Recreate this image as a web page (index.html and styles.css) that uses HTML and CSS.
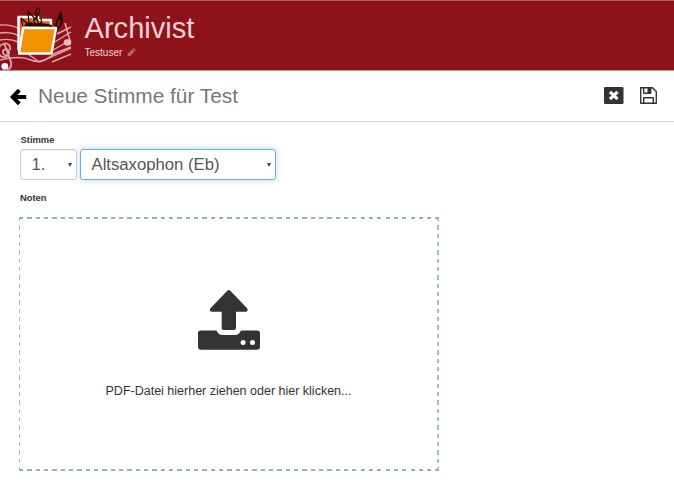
FILE: index.html
```
<!DOCTYPE html>
<html lang="de">
<head>
<meta charset="utf-8">
<title>Archivist</title>
<link rel="stylesheet" href="styles.css">
</head>
<body>
<header class="banner">
  <svg class="logo" viewBox="0 0 72 70" aria-hidden="true">
    <g fill="none" stroke="#dda5ac" stroke-width="1.4">
      <path d="M0 25Q10 24 20 29M0 33Q10 31 20 36M0 40Q10 38 18 42M0 60Q20 55 31 60T55 53L71 47"/>
      <path d="M28 54Q34 58 39 62Q43 61 53 56L71 48M52 62L71 54M53 43L71 32M57 34L71 27M53 50L71 40"/>
      <path d="M65 23L70 41" stroke-width="1.6"/>
      <path d="M7 55a3 3 0 1 1 1-5c3 3-1 8-5 7c-6-1-6-11 0-13c5-2 8 2 7 6M4 43L11 62Q12 69 7 69" stroke-width="1.8"/>
    </g>
    <ellipse cx="67.500" cy="42.500" rx="3.800" ry="3.300" fill="#e5bdc3"/>
    <circle cx="4.800" cy="66.300" r="3.400" fill="#fff"/>
    <path d="M18.500 17H38L40 20H51V50H18.500Z" fill="#ef5a24" stroke="#fff" stroke-width="2.400" stroke-linejoin="round"/>
    <path d="M24 26l2-3 5-1 5 2 5-1 7 1 4 1v2Z" fill="#17120d"/>
    <g fill="none" stroke="#100b0b" stroke-width="1.200">
      <path d="M21 18l9 8M21 18l2 8M28 11l1 13M28 11l8 9M35 19C39 14 40 10 39 8C36 8 35 12 36 16L39 25M38 17c-5 0-6 6-1 7s6-5 2-6"/>
      <path d="M61 12C60 17 55.500 21 56 27M61 12C61 17 64 22 59.500 26.500Q58 29 55 28.500" stroke-width="1.500"/>
    </g>
    <path d="M61 11L58.500 18L61.500 22L62.500 18Z" fill="#100b0b"/>
    <path d="M23 28H56L51.500 53.500H19Z" fill="#f39200" stroke="#fff" stroke-width="2.400" stroke-linejoin="round"/>
  </svg>
  <div class="brand">
    <h1>Archivist</h1>
    <div class="user">Testuser
      <svg class="pencil" viewBox="0 0 10 10"><path d="M0.500 9.500L1 6.500L5.700 1.800L8.200 4.300L3.500 9ZM6.300 1.200L7 .5Q7.500 0 8 .5L9.500 2Q10 2.500 9.500 3L8.800 3.700Z"/></svg>
    </div>
  </div>
</header>
<nav class="toolbar">
  <svg class="back" viewBox="0 0 17 18"><path d="M9.300 2.200L2.700 9L9.300 15.800M3 9H16.200" fill="none" stroke="#000" stroke-width="4"/></svg>
  <h2>Neue Stimme für Test</h2>
  <svg class="close" viewBox="0 0 20 17"><rect width="19.500" height="17" rx="1.300" fill="#333"/><path d="M6 4.800L13.500 12.200M13.500 4.800L6 12.200" stroke="#fff" stroke-width="3.200"/></svg>
  <svg class="save" viewBox="0 0 17 17"><path d="M.7.700H12.500L16.300 4.500V16.300H.7ZM3.700.7V6.300H10.700V.7M3.700 16V10.700H13.300V16" fill="none" stroke="#333" stroke-width="1.400" stroke-linejoin="round"/><path d="M7.500 1h3v5h-3z" fill="#333"/></svg>
</nav>
<main>
  <div class="label first">Stimme</div>
  <div class="fields">
    <div class="select number"><span>1.</span><i></i></div>
    <div class="select focused"><span>Altsaxophon (Eb)</span><i></i></div>
  </div>
  <div class="label notes">Noten</div>
  <div class="dropzone">
    <svg class="upload" viewBox="0 0 62 60"><path d="M30.800 0Q31.500 0 32.300.8L49.300 18.500Q50.500 21.700 47.500 21.700H38V38Q38 40 36 40H25.500Q23.700 40 23.700 38V21.700H14Q11 21.500 12.300 18.500L29.300.8Q30 0 30.800 0Z"/><path fill-rule="evenodd" d="M2.500 40.500H18.500Q20.500 45 24.500 45H37Q41 45 43 40.500H59Q62 40.500 62 43.500V56.500Q62 59.700 59 59.700H3Q0 59.700 0 56.500V43Q0 40.500 2.500 40.500ZM42.600 52.500a2.500 2.500 0 1 0 5 0a2.500 2.500 0 1 0-5 0ZM52 52.500a2.500 2.500 0 1 0 5 0a2.500 2.500 0 1 0-5 0Z"/></svg>
    <p>PDF-Datei hierher ziehen oder hier klicken...</p>
  </div>
</main>
</body>
</html>
```
FILE: styles.css
```
* { box-sizing: border-box; }
body { margin: 0; background: #fff; font-family: "Liberation Sans", Arial, sans-serif; color: #333; }
h1, h2, p { margin: 0; font-weight: 400; white-space: nowrap; }
svg { display: block; flex: none; }
.banner { display: flex; height: 71px; background: #8e121a; border-top: 1px solid #a5656a; border-bottom: 1px solid #b39a9c; color: #eed3d6; }
.logo { width: 72px; height: 70px; margin-top: -1px; }
.brand { padding: 10px 0 0 12.5px; }
h1 { font-size: 29.1px; line-height: 34px; }
.user { display: flex; align-items: center; gap: 5px; font-size: 10px; line-height: 15px; }
.pencil { width: 9px; height: 9px; fill: #b9676e; }
.toolbar { display: flex; align-items: center; height: 51px; padding: 0 17px 0 10px; border-bottom: 1px solid #d5d5d5; }
.back { width: 17px; height: 18px; margin-top: 2px; }
h2 { margin-left: 11px; flex: 1; font-size: 20.85px; line-height: 26px; color: #777; }
.close { width: 20px; height: 17px; margin: -1px 16px 0 0; }
.save { width: 17px; height: 17px; margin-top: -1px; }
main { padding: 11px 0 0 20px; }
.label { font-size: 9.4px; font-weight: 700; line-height: 13px; }
.first { padding-left: .5px; }
.fields { display: flex; gap: 3px; margin-top: 3px; }
.select { display: flex; align-items: center; justify-content: space-between; width: 196px; height: 31px; padding: 0 4px 0 10.5px; border: 1px solid #ccc; border-radius: 3px; font-size: 16.7px; color: #555; box-shadow: inset 0 1px 1px rgba(0,0,0,.06); }
.select span { white-space: nowrap; }
.select i { border: 2px solid transparent; border-top: 4px solid #444; border-bottom: 0; }
.number { width: 57px; }
.focused { border-color: #66afe9; box-shadow: 0 0 6px rgba(102,175,233,.5); }
.notes { margin-top: 11px; }
.dropzone {
  --h: repeating-linear-gradient(90deg, #91b4b4 0 4.3px, transparent 4.3px 8.33px);
  --v: repeating-linear-gradient(180deg, #a0bfc0 0 4.3px, transparent 4.3px 8.33px);
  display: flex; flex-direction: column; align-items: center; width: 420px; height: 254px; margin: 13px 0 0 -1px; padding: 73px 1px 0 0;
  background: var(--h) top / 100% 2px no-repeat, var(--h) bottom / 100% 2px no-repeat, var(--v) left / 1px 100% no-repeat, var(--v) right / 2px 100% no-repeat;
}
.upload { width: 62px; height: 60px; fill: #333; }
.dropzone p { margin-top: 33px; font-size: 12.5px; line-height: 16px; }
```
